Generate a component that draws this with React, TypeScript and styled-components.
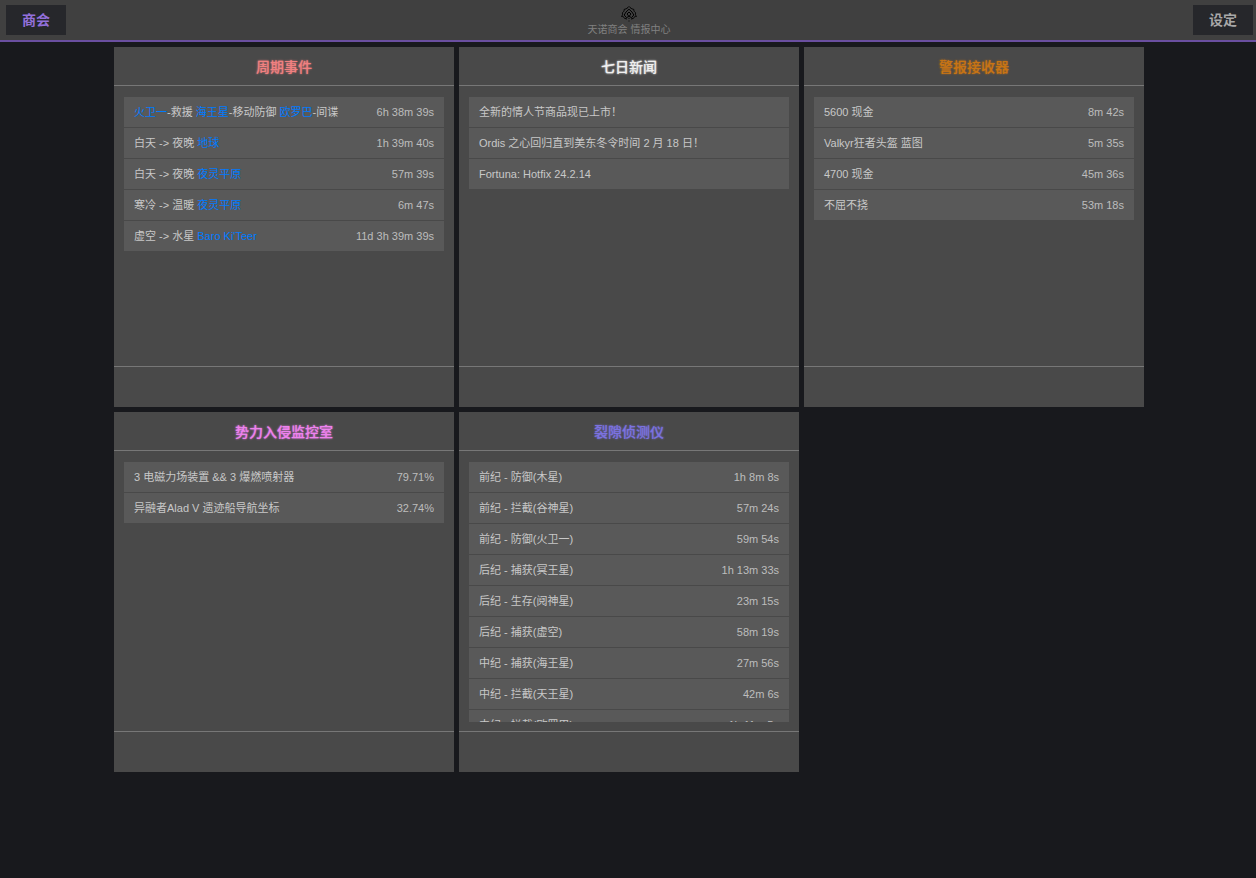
import React from 'react';
import styled, { createGlobalStyle } from 'styled-components';

const GlobalStyle = createGlobalStyle`
  * { box-sizing: border-box; }
  html { background: #18191d; }
  body {
    margin: 0;
    font-family: "Liberation Sans", "Noto Sans CJK SC", sans-serif;
    font-size: 11px;
    color: #c8c8c8;
  }
`;

const TopBar = styled.header`
  display: grid;
  grid-template-columns: 60px 1fr 60px;
  align-items: center;
  height: 42px;
  padding: 0 3px 0 6px;
  background: #404040;
  border-bottom: 2px solid #6a4fa0;
`;

const NavButton = styled.button<{ $active?: boolean }>`
  height: 30px;
  padding: 0;
  border: 0;
  background: #26272b;
  color: ${({ $active }) => ($active ? '#9370db' : '#a8a8a8')};
  font: bold 14px/30px "Liberation Sans", "Noto Sans CJK SC", sans-serif;
  cursor: pointer;
`;

const Brand = styled.div`
  display: flex;
  flex-direction: column;
  align-items: center;
  padding: 4px 1px 0 0;
`;

const BrandName = styled.h1`
  margin: 0;
  font-size: 10px;
  font-weight: normal;
  line-height: 16px;
  color: #808080;
`;

const Board = styled.main`
  display: grid;
  grid-template-columns: repeat(auto-fill, 340px);
  justify-content: center;
  gap: 5px;
  padding: 5px 2px 5px 4px;
`;

const Panel = styled.section`
  display: grid;
  grid-template-rows: 39px 280px 41px;
  background: #494949;
`;

const PanelTitle = styled.h2<{ $color: string }>`
  margin: 0;
  border-bottom: 1px solid #777;
  color: ${({ $color }) => $color};
  font-size: 14px;
  line-height: 40px;
  font-weight: 500;
  text-align: center;
  text-shadow: 0 0 2px ${({ $color }) => $color};
`;

const PanelBody = styled.div`
  padding: 11px 10px 9px;
`;

const PanelFooter = styled.footer`
  border-top: 1px solid #777;
`;

const List = styled.ul`
  display: flex;
  flex-direction: column;
  gap: 1px;
  max-height: 100%;
  margin: 0;
  padding: 0;
  overflow: auto;
  scrollbar-width: none;
  list-style: none;
`;

const Row = styled.li`
  display: flex;
  flex: none;
  justify-content: space-between;
  height: 30px;
  padding: 0 10px;
  background: #595959;
  line-height: 30px;
  white-space: pre;
`;

const Place = styled.span`
  color: #007bff;
`;

const Value = styled.span`
  color: #bdbdbd;
`;

type Item = { label: React.ReactNode; value?: string };
type PanelData = { title: string; color: string; items: Item[] };

const panels: PanelData[] = [
  {
    title: '周期事件',
    color: '#f08080',
    items: [
      {
        label: (
          <>
            <Place>火卫一</Place>-救援 <Place>海王星</Place>-移动防御 <Place>欧罗巴</Place>-间谍
          </>
        ),
        value: '6h 38m 39s',
      },
      { label: <>白天 -&gt; 夜晚 <Place>地球</Place></>, value: '1h 39m 40s' },
      { label: <>白天 -&gt; 夜晚 <Place>夜灵平原</Place></>, value: '57m 39s' },
      { label: <>寒冷 -&gt; 温暖 <Place>夜灵平原</Place></>, value: '6m 47s' },
      { label: <>虚空 -&gt; 水星 <Place>Baro Ki'Teer</Place></>, value: '11d 3h 39m 39s' },
    ],
  },
  {
    title: '七日新闻',
    color: '#f0f0f0',
    items: [
      { label: '全新的情人节商品现已上市！' },
      { label: 'Ordis 之心回归直到美东冬令时间 2 月 18 日！' },
      { label: 'Fortuna: Hotfix 24.2.14' },
    ],
  },
  {
    title: '警报接收器',
    color: '#c87414',
    items: [
      { label: '5600 现金', value: '8m 42s' },
      { label: 'Valkyr狂者头盔 蓝图', value: '5m 35s' },
      { label: '4700 现金', value: '45m 36s' },
      { label: '不屈不挠', value: '53m 18s' },
    ],
  },
  {
    title: '势力入侵监控室',
    color: '#ee82ee',
    items: [
      { label: '3 电磁力场装置 && 3 爆燃喷射器', value: '79.71%' },
      { label: '异融者Alad V 遗迹船导航坐标', value: '32.74%' },
    ],
  },
  {
    title: '裂隙侦测仪',
    color: '#7b72e0',
    items: [
      { label: '前纪 - 防御(木星)', value: '1h 8m 8s' },
      { label: '前纪 - 拦截(谷神星)', value: '57m 24s' },
      { label: '前纪 - 防御(火卫一)', value: '59m 54s' },
      { label: '后纪 - 捕获(冥王星)', value: '1h 13m 33s' },
      { label: '后纪 - 生存(阋神星)', value: '23m 15s' },
      { label: '后纪 - 捕获(虚空)', value: '58m 19s' },
      { label: '中纪 - 捕获(海王星)', value: '27m 56s' },
      { label: '中纪 - 拦截(天王星)', value: '42m 6s' },
      { label: '中纪 - 拦截(欧罗巴)', value: '1h 11m 5s' },
    ],
  },
];

const LotusIcon = () => (
  <svg width="16" height="16" viewBox="0 0 16 16" fill="none" stroke="#000" strokeWidth="1" aria-hidden="true">
    <path d="M8 0.5 C6.8 2 5 3 3.2 3.4 C3.2 5 2.6 6 1.2 7 C2 8 1.6 9.4 0.4 10.4 C2 10.4 3 11 3.6 12.4" />
    <path d="M8 0.5 C9.2 2 11 3 12.8 3.4 C12.8 5 13.4 6 14.8 7 C14 8 14.4 9.4 15.6 10.4 C14 10.4 13 11 12.4 12.4" />
    <path d="M8 3.2 L5 6 L3.2 9 L5.4 11.6 M8 3.2 L11 6 L12.8 9 L10.6 11.6" />
    <path d="M8 6 L10 8 L8 10.4 L6 8 Z" />
    <path d="M5.4 11.6 L8 10.4 L10.6 11.6 M3.6 12.4 L6 13 M12.4 12.4 L10 13" />
    <path d="M7.5 12.5 H8.5 M7.5 15 H8.5" />
  </svg>
);

export default function App() {
  return (
    <>
      <GlobalStyle />
      <TopBar>
        <NavButton type="button" $active>商会</NavButton>
        <Brand>
          <LotusIcon />
          <BrandName>天诺商会 情报中心</BrandName>
        </Brand>
        <NavButton type="button">设定</NavButton>
      </TopBar>
      <Board>
        {panels.map((panel) => (
          <Panel key={panel.title}>
            <PanelTitle $color={panel.color}>{panel.title}</PanelTitle>
            <PanelBody>
              <List>
                {panel.items.map((item, i) => (
                  <Row key={i}>
                    <span>{item.label}</span>
                    {item.value && <Value>{item.value}</Value>}
                  </Row>
                ))}
              </List>
            </PanelBody>
            <PanelFooter />
          </Panel>
        ))}
      </Board>
    </>
  );
}
